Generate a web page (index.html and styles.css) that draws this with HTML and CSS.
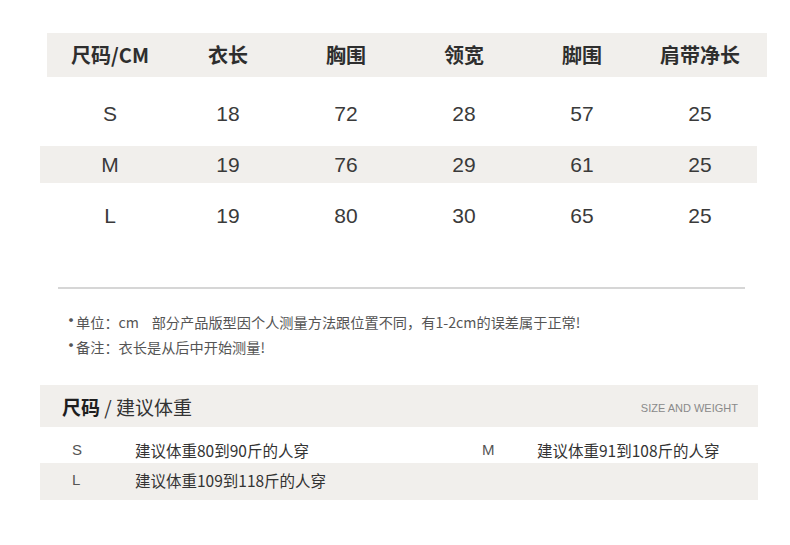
FILE: index.html
```html
<!DOCTYPE html>
<html lang="zh-CN">
<head>
<meta charset="utf-8">
<title>尺码表</title>
<link rel="stylesheet" href="styles.css">
</head>
<body>
<div class="page">
  <div class="size-head">
    <div class="cell">尺码/CM</div>
    <div class="cell">衣长</div>
    <div class="cell">胸围</div>
    <div class="cell">领宽</div>
    <div class="cell">脚围</div>
    <div class="cell">肩带净长</div>
  </div>
  <div class="size-rows">
    <div class="size-row">
      <div class="cell">S</div><div class="cell">18</div><div class="cell">72</div><div class="cell">28</div><div class="cell">57</div><div class="cell">25</div>
    </div>
    <div class="size-row shaded">
      <div class="cell">M</div><div class="cell">19</div><div class="cell">76</div><div class="cell">29</div><div class="cell">61</div><div class="cell">25</div>
    </div>
    <div class="size-row">
      <div class="cell">L</div><div class="cell">19</div><div class="cell">80</div><div class="cell">30</div><div class="cell">65</div><div class="cell">25</div>
    </div>
  </div>
  <div class="divider"></div>
  <ul class="notes">
    <li>单位：cm&nbsp;&nbsp;&nbsp;&nbsp;部分产品版型因个人测量方法跟位置不同，有1-2cm的误差属于正常!</li>
    <li>备注：衣长是从后中开始测量!</li>
  </ul>
  <div class="weight-head">
    <div class="weight-title"><b>尺码</b> / 建议体重</div>
    <div class="weight-sub">SIZE AND WEIGHT</div>
  </div>
  <div class="weight-row first">
    <div class="w-size">S</div>
    <div class="w-text">建议体重80到90斤的人穿</div>
    <div class="w-size">M</div>
    <div class="w-text">建议体重91到108斤的人穿</div>
  </div>
  <div class="weight-row shaded second">
    <div class="w-size">L</div>
    <div class="w-text">建议体重109到118斤的人穿</div>
    <div class="w-size"></div>
    <div class="w-text"></div>
  </div>
</div>
</body>
</html>
```
FILE: styles.css
```css
html, body {
  margin: 0;
  padding: 0;
  background: #ffffff;
}
body {
  font-family: "Noto Sans CJK SC", "Noto Sans", sans-serif;
  color: #333333;
}
.page {
  padding-top: 33px;
}
.size-head {
  margin-left: 47px;
  width: 720px;
  height: 44px;
  background: #f1efec;
  display: grid;
  grid-template-columns: repeat(6, 118px);
  padding-left: 4px;
  box-sizing: border-box;
  align-items: center;
}
.size-head .cell {
  text-align: center;
  font-size: 20px;
  font-weight: 700;
  color: #2e2e2e;
  line-height: 44px;
}
.size-rows {
  margin-top: 18px;
  display: flex;
  flex-direction: column;
  gap: 14px;
}
.size-row {
  margin-left: 40px;
  width: 717px;
  height: 37px;
  display: grid;
  grid-template-columns: repeat(6, 118px);
  padding-left: 11px;
  box-sizing: border-box;
  align-items: center;
}
.size-row .cell {
  text-align: center;
  font-family: "Liberation Sans", Arial, sans-serif;
  font-size: 21px;
  color: #3a3a3a;
  line-height: 37px;
}
.shaded {
  background: #f1efec;
}
.divider {
  margin: 53px 0 0 58px;
  width: 687px;
  height: 2px;
  background: #d6d6d6;
}
.notes {
  list-style: none;
  margin: 21px 0 0 0;
  padding: 0 0 0 62px;
  font-size: 14.2px;
  line-height: 25px;
  color: #555555;
}
.notes li {
  position: relative;
  padding-left: 14px;
}
.notes li::before {
  content: "•";
  position: absolute;
  left: 0;
  top: -3px;
  font-size: 18px;
  color: #555555;
}
.weight-head {
  margin: 25px 0 0 40px;
  width: 718px;
  height: 42px;
  background: #f1efec;
  display: flex;
  align-items: center;
  justify-content: space-between;
  padding: 0 20px 0 22px;
  box-sizing: border-box;
}
.weight-title {
  font-size: 19px;
  color: #333333;
}
.weight-title b {
  font-weight: 700;
  color: #1e1e1e;
}
.weight-sub {
  font-family: "Liberation Sans", Arial, sans-serif;
  font-size: 11px;
  color: #8a8a8a;
  padding-top: 3px;
}
.weight-row {
  margin-left: 40px;
  width: 718px;
  display: grid;
  grid-template-columns: 95px 347px 55px 1fr;
  box-sizing: border-box;
  font-size: 15.5px;
  line-height: 26px;
  color: #333333;
}
.weight-row.first {
  height: 36px;
  padding-top: 10px;
}
.weight-row.second {
  height: 37px;
  padding-top: 4px;
}
.w-size {
  font-family: "Liberation Sans", Arial, sans-serif;
  font-size: 15px;
  color: #555555;
  padding-left: 32px;
}
.weight-row .w-size:nth-child(3) {
  padding-left: 0;
}
```
